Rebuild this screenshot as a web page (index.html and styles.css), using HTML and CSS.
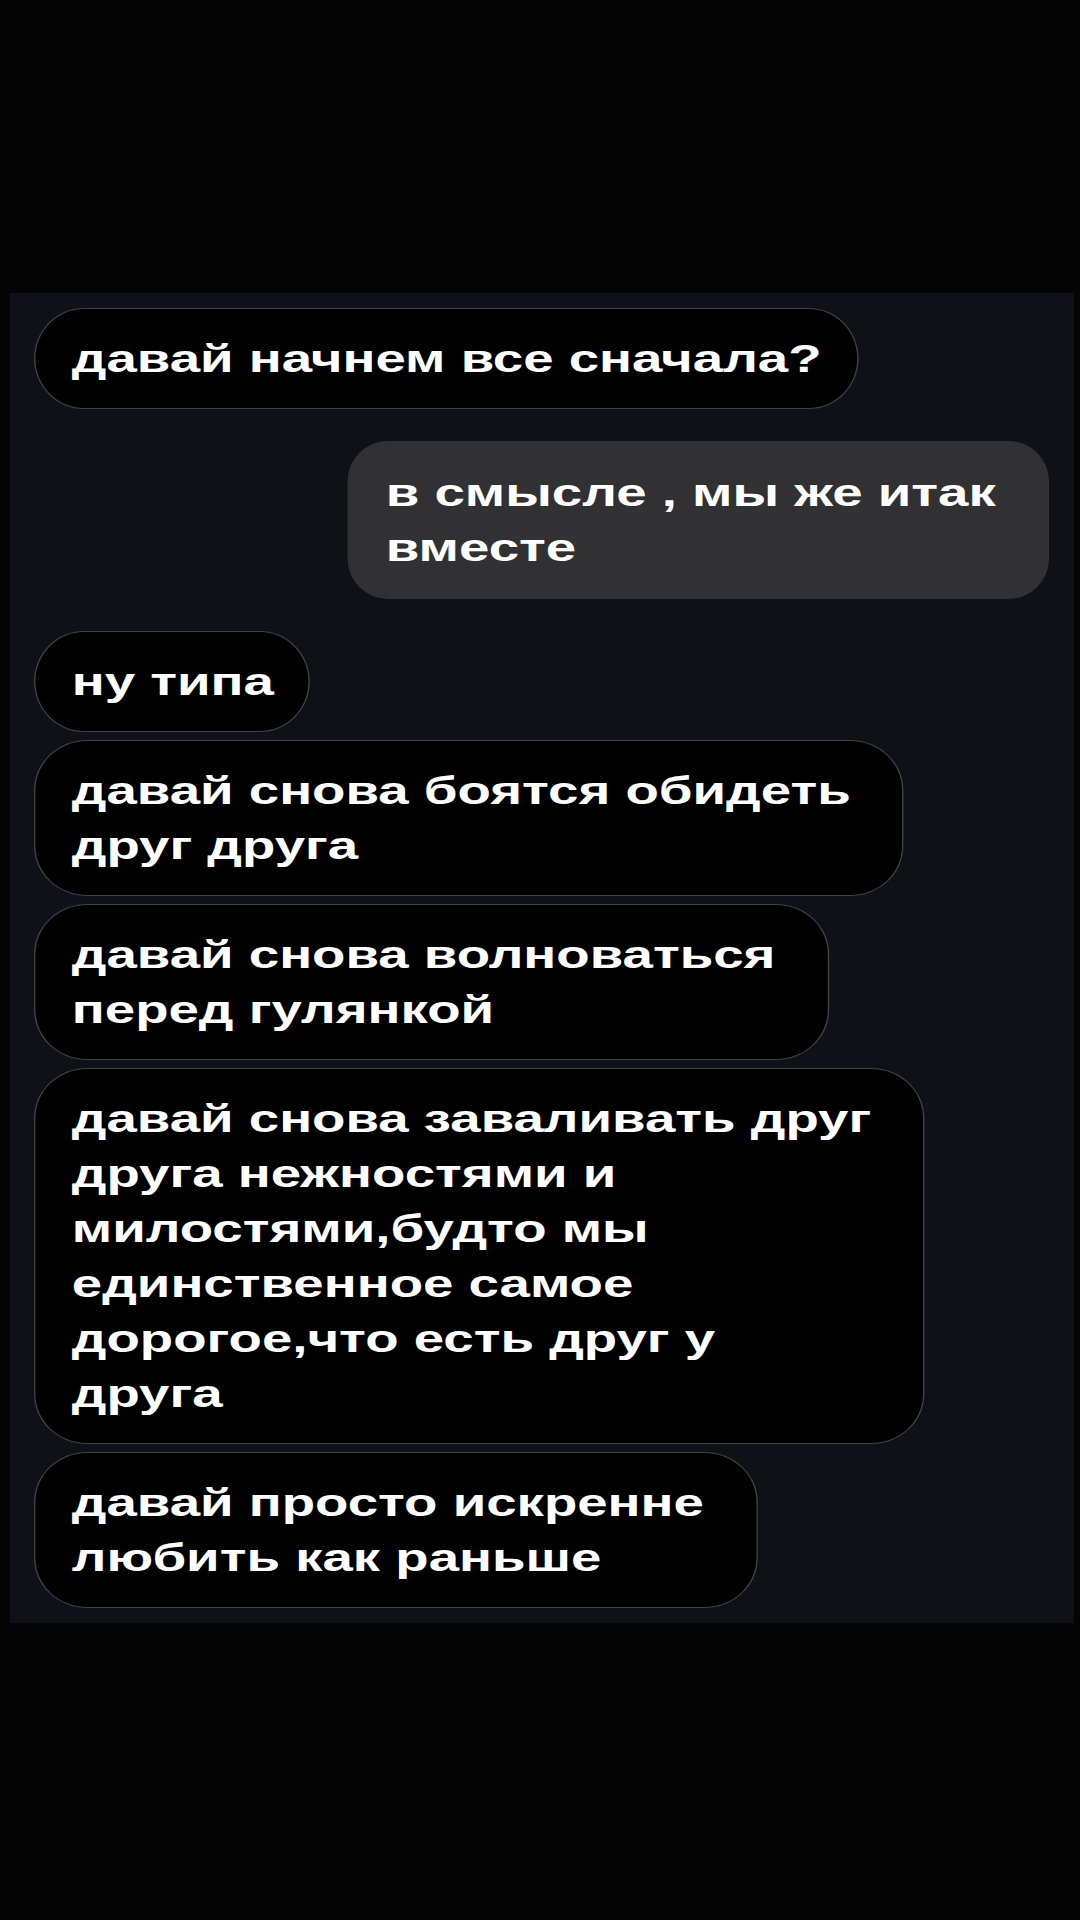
FILE: index.html
```html
<!DOCTYPE html>
<html lang="ru">
<head>
<meta charset="UTF-8">
<meta name="viewport" content="width=device-width, initial-scale=1.0">
<title>Чат</title>
<link rel="stylesheet" href="styles.css">
</head>
<body>

<div class="chat">
    <div class="thread">
        <div class="group">
            <div class="msg in">давай начнем все сначала?</div>
        </div>

        <div class="group out-group">
            <div class="msg out multi">в смысле , мы же итак<br>вместе</div>
        </div>

        <div class="group">
            <div class="msg in">ну типа</div>
            <div class="msg in multi">давай снова боятся обидеть<br>друг друга</div>
            <div class="msg in multi">давай снова волноваться<br>перед гулянкой</div>
            <div class="msg in multi">давай снова заваливать друг<br>друга нежностями и<br>милостями,будто мы<br>единственное самое<br>дорогое,что есть друг у<br>друга</div>
            <div class="msg in multi">давай просто искренне<br>любить как раньше</div>
        </div>
    </div>
</div>

</body>
</html>
```

FILE: styles.css
```css
body { margin: 0; background: #040404; font-family: "Liberation Sans", Arial, sans-serif; min-height: 1920px; }
.chat { margin: 293px 6px 0 10px; background: #0e1115; padding: 15px 25px 15px 24px; }
/* the screenshot text is wide, so the thread is stretched sideways */
.thread { width: 725px; transform: scaleX(1.4); transform-origin: 0 0; display: flex; flex-direction: column; gap: 32px; }
.group { display: flex; flex-direction: column; align-items: flex-start; gap: 8px; }
.out-group { align-items: flex-end; }
.msg { color: #fff; font-size: 39px; font-weight: bold; line-height: 55px; white-space: nowrap; box-sizing: border-box; }
.in { background: #000; border: 1px solid #404246; padding: 22px 25px 22px 26px; border-radius: 36px / 51px; }
.in.multi { padding-right: 37px; border-radius: 38px / 50px; }
.out { background: #313133; padding: 24px 27px; border-radius: 29px / 40px; }
.out.multi { padding-right: 38px; }
```
